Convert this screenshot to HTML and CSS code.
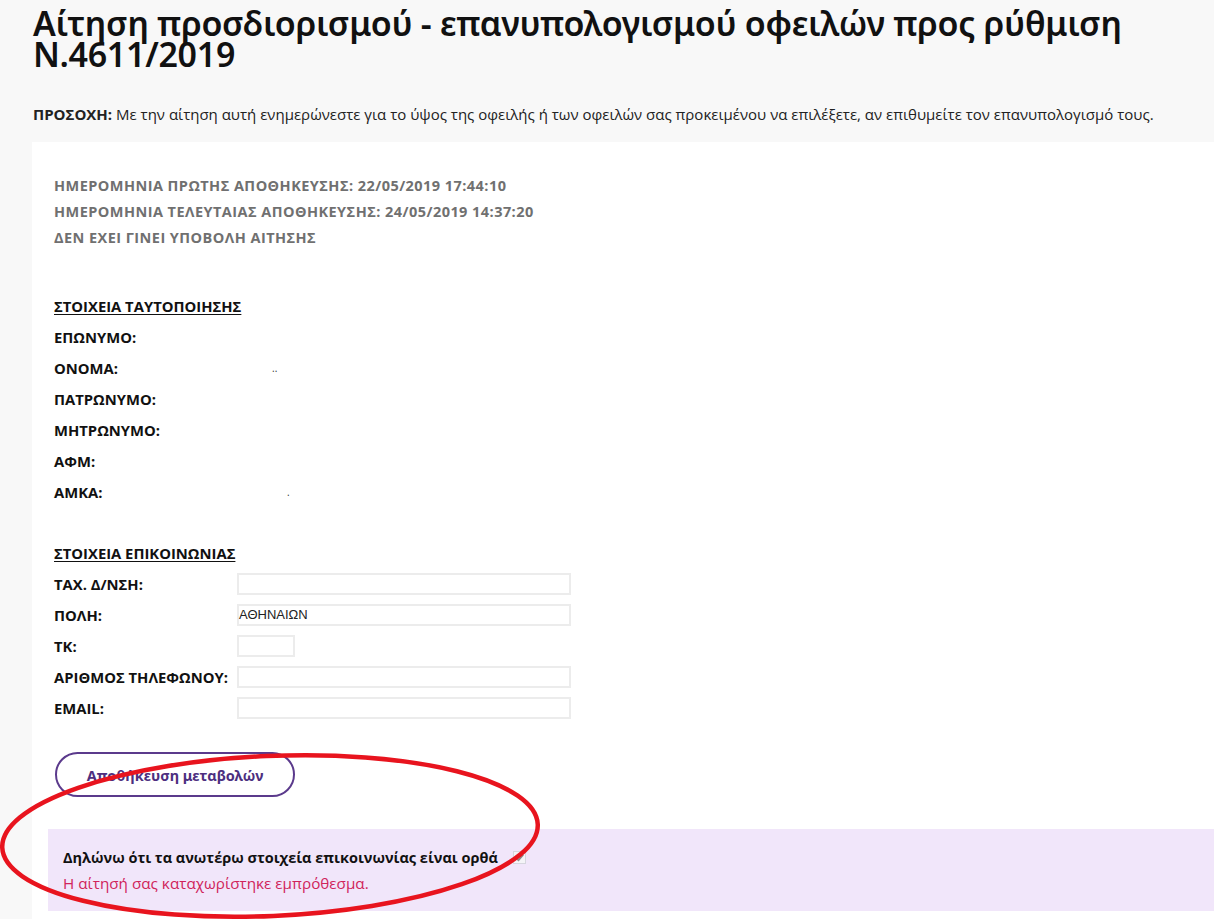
FILE: index.html
```html
<!DOCTYPE html>
<html lang="el">
<head>
<meta charset="utf-8">
<title>Αίτηση προσδιορισμού</title>
<link rel="stylesheet" href="styles.css">
</head>
<body>
<div class="page">
  <h1 class="title">Αίτηση προσδιορισμού - επανυπολογισμού οφειλών προς ρύθμιση Ν.4611/2019</h1>
  <p class="notice"><b>ΠΡΟΣΟΧΗ:</b> Με την αίτηση αυτή ενημερώνεστε για το ύψος της οφειλής ή των οφειλών σας προκειμένου να επιλέξετε, αν επιθυμείτε τον επανυπολογισμό τους.</p>
  <div class="panel">
    <div class="meta">
      <div>ΗΜΕΡΟΜΗΝΙΑ ΠΡΩΤΗΣ ΑΠΟΘΗΚΕΥΣΗΣ: 22/05/2019 17:44:10</div>
      <div>ΗΜΕΡΟΜΗΝΙΑ ΤΕΛΕΥΤΑΙΑΣ ΑΠΟΘΗΚΕΥΣΗΣ: 24/05/2019 14:37:20</div>
      <div>ΔΕΝ ΕΧΕΙ ΓΙΝΕΙ ΥΠΟΒΟΛΗ ΑΙΤΗΣΗΣ</div>
    </div>
    <div class="section">
      <div class="row heading">ΣΤΟΙΧΕΙΑ ΤΑΥΤΟΠΟΙΗΣΗΣ</div>
      <div class="row"><span class="label">ΕΠΩΝΥΜΟ:</span></div>
      <div class="row"><span class="label">ΟΝΟΜΑ:</span><span class="value">..</span></div>
      <div class="row"><span class="label">ΠΑΤΡΩΝΥΜΟ:</span></div>
      <div class="row"><span class="label">ΜΗΤΡΩΝΥΜΟ:</span></div>
      <div class="row"><span class="label">ΑΦΜ:</span></div>
      <div class="row"><span class="label">ΑΜΚΑ:</span><span class="value v2">.</span></div>
    </div>
    <div class="section contact">
      <div class="row heading">ΣΤΟΙΧΕΙΑ ΕΠΙΚΟΙΝΩΝΙΑΣ</div>
      <div class="row"><span class="label">ΤΑΧ. Δ/ΝΣΗ:</span><span class="field"></span></div>
      <div class="row"><span class="label">ΠΟΛΗ:</span><span class="field">ΑΘΗΝΑΙΩΝ</span></div>
      <div class="row"><span class="label">ΤΚ:</span><span class="field short"></span></div>
      <div class="row"><span class="label">ΑΡΙΘΜΟΣ ΤΗΛΕΦΩΝΟΥ:</span><span class="field"></span></div>
      <div class="row"><span class="label">EMAIL:</span><span class="field"></span></div>
    </div>
    <button class="save" type="button">Αποθήκευση μεταβολών</button>
    <div class="declare">
      <div class="declare-line"><b>Δηλώνω ότι τα ανωτέρω στοιχεία επικοινωνίας είναι ορθά</b><span class="check"><svg viewBox="0 0 12 12" width="11" height="11"><path d="M2.2 6.2 L4.9 8.8 L10 2.8" fill="none" stroke="#8c8c8c" stroke-width="2.2"/></svg></span></div>
      <div class="ok">Η αίτησή σας καταχωρίστηκε εμπρόθεσμα.</div>
    </div>
  </div>
</div>
<svg class="annot" width="560" height="180" viewBox="0 0 560 180"><ellipse cx="270" cy="86" rx="268" ry="80" transform="rotate(-2.5 270 86)" fill="none" stroke="#e8141e" stroke-width="4.5"/></svg>
</body>
</html>
```
FILE: styles.css
```css
html, body { margin: 0; padding: 0; }
body {
  background: #f8f8f8;
  font-family: "Open Sans", "Noto Sans", sans-serif;
  color: #111;
  position: relative;
  min-height: 919px;
  overflow: hidden;
}
.page { padding-top: 8px; }
.title {
  margin: 0 0 0 33px;
  font-family: "Noto Sans", sans-serif;
  font-weight: 600;
  font-size: 34px;
  line-height: 31px;
  color: #111;
  letter-spacing: -0.3px;
}
.notice {
  margin: 34px 0 0 33px;
  font-size: 15px;
  line-height: 20px;
  color: #222;
}
.notice b { font-weight: 700; }
.panel {
  margin: 18px 0 0 32px;
  background: #fff;
  padding: 31px 0 8px 22px;
  min-height: 760px;
}
.meta {
  font-size: 14.5px;
  font-weight: 700;
  letter-spacing: 0.45px;
  line-height: 26px;
  color: #707070;
}
.section { margin-top: 39px; }
.section.contact { margin-top: 30px; }
.row {
  display: flex;
  align-items: center;
  height: 31px;
  font-size: 14.8px;
  font-weight: 700;
  color: #111;
}
.heading { text-decoration: underline; text-underline-offset: 2px; }
.label { width: 183px; flex: none; }
.value { font-weight: 400; color: #333; margin-left: 35px; font-size: 10px; }
.value.v2 { margin-left: 50px; }
.field {
  box-sizing: border-box;
  width: 334px;
  height: 22px;
  border: 2px solid #ececec;
  background: #fff;
  font-family: "Liberation Sans", Arial, sans-serif;
  font-weight: 400;
  font-size: 13px;
  color: #222;
  display: flex;
  align-items: center;
  padding-left: 0;
}
.field.short { width: 58px; }
.save {
  display: block;
  margin-top: 29px;
  margin-left: 1px;
  width: 240px;
  height: 45px;
  border: 2px solid #5b3a8c;
  border-radius: 23px;
  background: #fff;
  color: #4d2f80;
  font-family: "Noto Sans", sans-serif;
  font-weight: 700;
  font-size: 14.5px;
  cursor: pointer;
}
.declare {
  margin: 32px 0 0 -6px;
  background: #f1e6fa;
  padding: 15px;
  height: 52px;
}
.declare-line {
  display: flex;
  align-items: center;
  height: 26px;
  font-size: 14.5px;
  color: #111;
}
.declare-line b { font-weight: 700; }
.check {
  display: inline-flex;
  align-items: center;
  justify-content: center;
  box-sizing: border-box;
  width: 13px;
  height: 13px;
  margin-left: 15px;
  border: 1px solid #d6d6de;
  background: #f4f4f7;
}
.ok {
  height: 26px;
  line-height: 26px;
  font-size: 15.25px;
  color: #d0245a;
}
.annot {
  position: absolute;
  left: 0;
  top: 750px;
  pointer-events: none;
}
```
